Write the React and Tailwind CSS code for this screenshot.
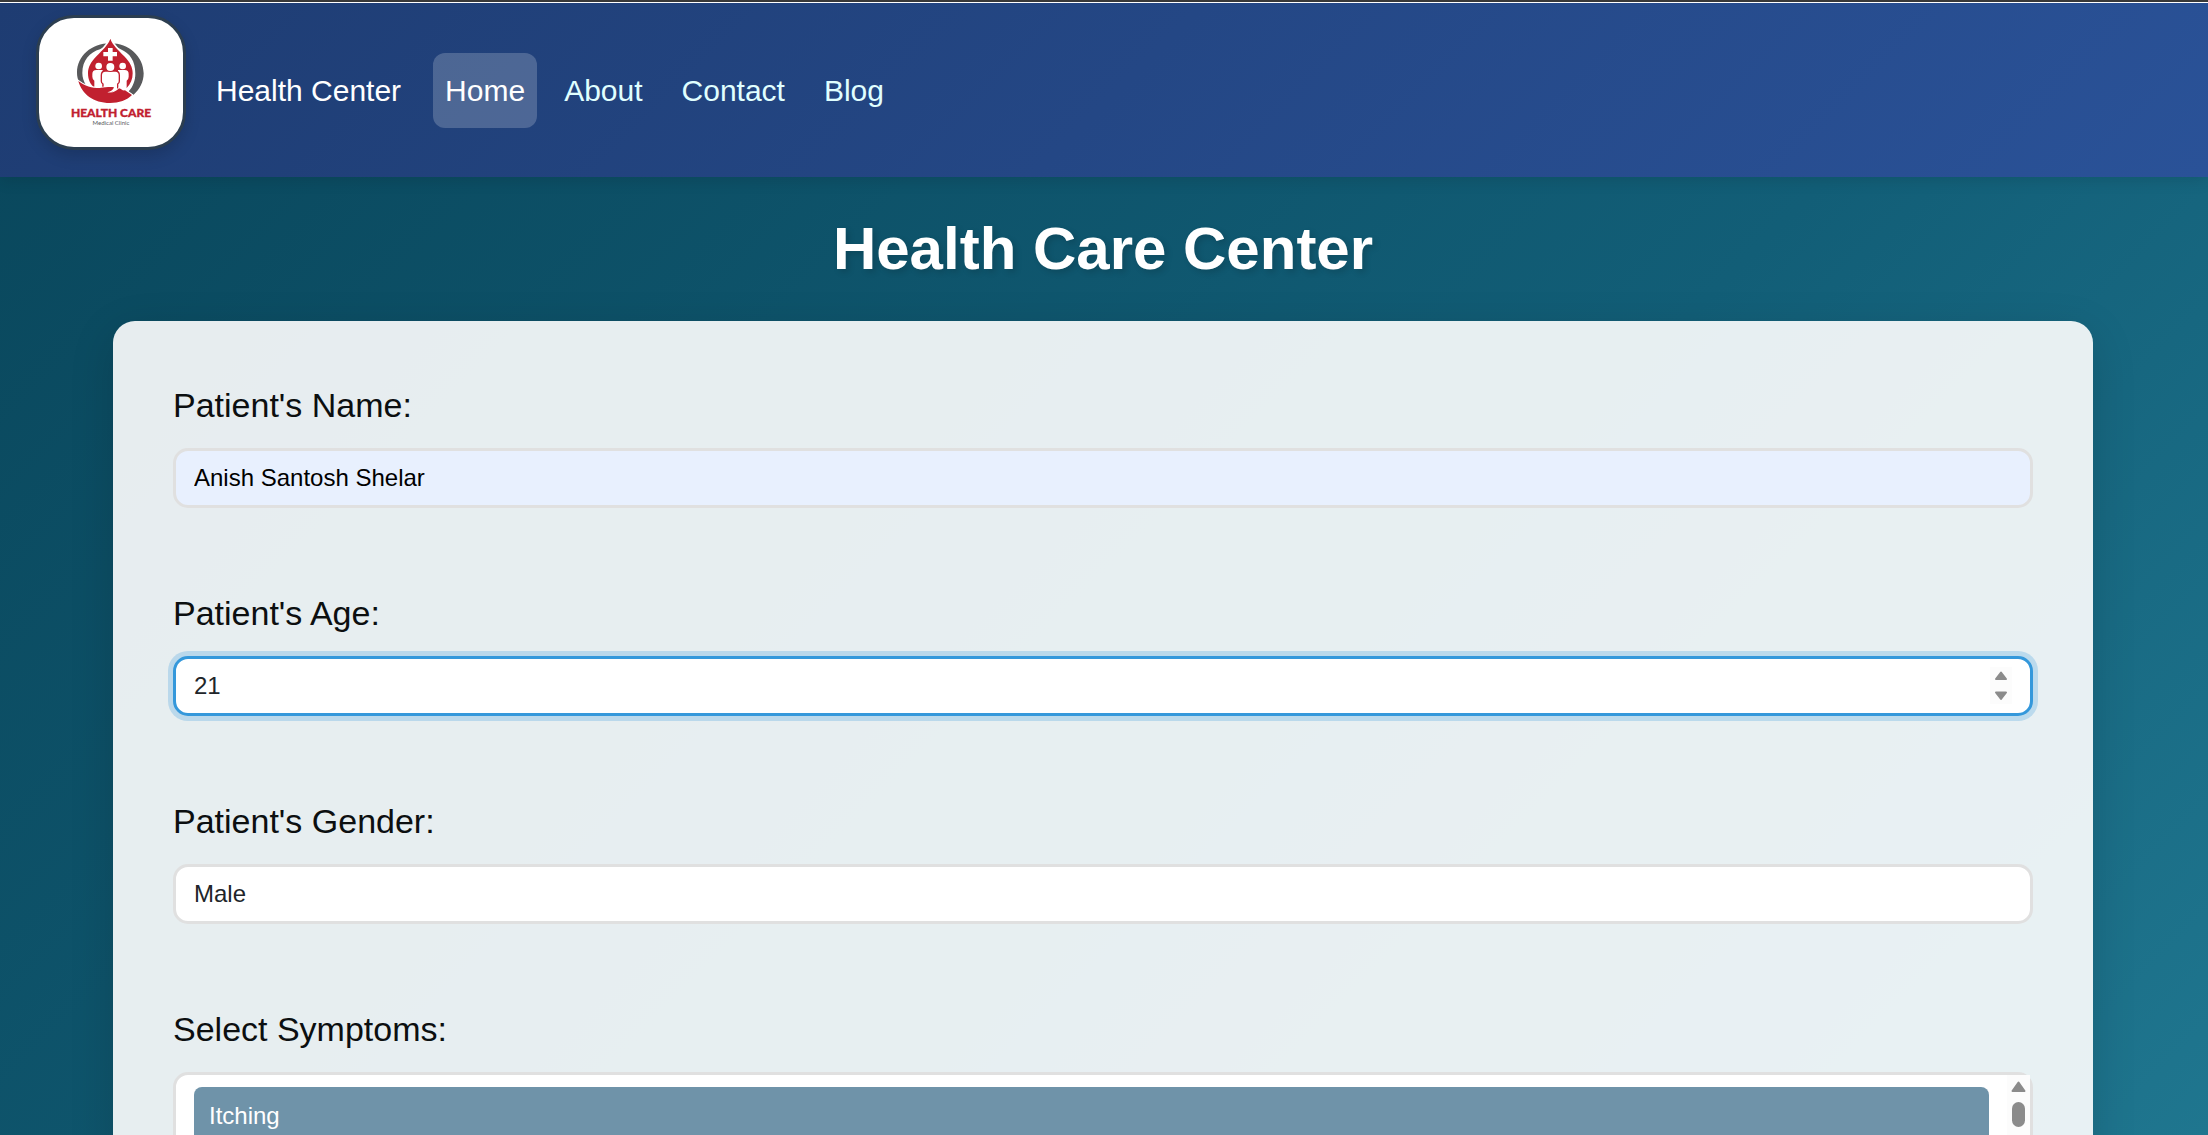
import React from "react";

const navLinks = ["Home", "About", "Contact", "Blog"];

const labelClass = "mb-[19px] block text-[34px] leading-[48px] text-[#0c0f10]";
const fieldClass =
  "block h-[60px] w-full appearance-none rounded-[15px] border-[3px] px-[18px] text-[24px] outline-none";

function Logo() {
  return (
    <svg viewBox="117 54 432 387" className="h-full w-full" role="img" aria-label="Health Care Medical Clinic">
      <path
        d="M331 130 C274 130 231 168 231 218 C231 228 233 236 236 244 L258 256 C251 244 247 232 247 219 C247 181 269 157 300 148 Z"
        fill="#58595b"
      />
      <path
        d="M331 130 C387 130 431 170 431 220 C431 246 419 269 400 285 L386 274 C399 260 406 241 406 221 C406 183 390 160 362 148 Z"
        fill="#58595b"
      />
      <path
        d="M331 116 C324 136 307 150 290 168 C272 186 264 202 264 220 C264 239 271 254 284 264 L380 264 C392 252 398 238 398 220 C398 202 390 186 372 168 C355 150 338 136 331 116 Z"
        fill="#c1202f"
        stroke="#fff"
        strokeWidth="9"
        paintOrder="stroke"
      />
      <path d="M324 144 h14 v12 h13 v13 h-13 v13 h-14 v-13 h-14 v-13 h14 Z" fill="#fff" />
      <g fill="#fff">
        <circle cx="296" cy="198" r="10" />
        <circle cx="368" cy="198" r="10" />
        <path d="M277 222 Q277 210 289 210 H308 V266 H283 V242 Q277 238 277 230 Z" />
        <path d="M386 222 Q386 210 374 210 H354 V266 H380 V242 Q386 238 386 230 Z" />
      </g>
      <path
        d="M304 226 Q304 213 316 213 H346 Q358 213 358 226 V244 Q358 250 353 252 V276 H309 V252 Q304 250 304 244 Z"
        fill="#fff"
        stroke="#c1202f"
        strokeWidth="4"
      />
      <circle cx="331" cy="201" r="15" fill="#c1202f" />
      <circle cx="331" cy="201" r="12" fill="#fff" />
      <path
        d="M235 243 C254 259 276 264 299 264 C318 262 330 260 342 262 C340 270 332 274 322 277 C338 280 348 274 357 265 C364 267 368 273 375 271 L396 285 C381 301 357 309 330 309 C280 309 246 283 235 243 Z"
        fill="#c1202f"
        stroke="#fff"
        strokeWidth="6"
        paintOrder="stroke"
      />
      <text
        x="333"
        y="351"
        textAnchor="middle"
        fill="#c1202f"
        stroke="#c1202f"
        strokeWidth="1"
        className="font-[Lato,sans-serif] text-[36px] font-black"
      >
        HEALTH CARE
      </text>
      <text
        x="333"
        y="375"
        textAnchor="middle"
        fill="#58595b"
        className="font-[Lato,sans-serif] text-[18px]"
      >
        Medical Clinic
      </text>
    </svg>
  );
}

function Header() {
  return (
    <header className="border-t border-white bg-linear-135 from-[#1e3c72] to-[#2a5298] shadow-[0_3px_15px_rgba(0,0,0,0.12)]">
      <nav className="flex items-start px-9 pt-3 pb-[27px]">
        <a
          href="#"
          className="h-[135px] w-[150px] overflow-hidden rounded-[38px] border-[3px] border-[#2c3e50] bg-white shadow-[0_6px_15px_rgba(0,0,0,0.15)]"
        >
          <Logo />
        </a>
        <div className="mt-[38px] flex items-center text-[30px] leading-[45px]">
          <a href="#" className="mr-8 ml-[30px] text-white">
            Health Center
          </a>
          <ul className="flex gap-[15px]">
            {navLinks.map((name) => (
              <li key={name}>
                <a
                  href="#"
                  className={
                    name === "Home"
                      ? "block rounded-xl bg-white/20 px-3 py-[15px] text-white"
                      : "block rounded-xl px-3 py-[15px] text-[#e0ffff]"
                  }
                >
                  {name}
                </a>
              </li>
            ))}
          </ul>
        </div>
      </nav>
    </header>
  );
}

function Spinner() {
  return (
    <svg
      viewBox="0 0 22 37"
      className="pointer-events-none absolute top-[11px] right-[21px] h-[37px] w-[22px] bg-[#fcfcfc]"
      fill="#8b8b8b"
      stroke="#8b8b8b"
      strokeWidth="2"
      strokeLinejoin="round"
      aria-hidden="true"
    >
      <path d="M11 5.500 L16 12 H6 Z" />
      <path d="M11 32 L16 25.500 H6 Z" />
    </svg>
  );
}

function ScrollTrack() {
  return (
    <div
      className="pointer-events-none absolute top-[3px] right-[3px] bottom-[3px] flex w-[23px] flex-col items-center gap-[9px] bg-[#fcfcfc] pt-[6px]"
      aria-hidden="true"
    >
      <svg viewBox="0 0 15 12" className="h-3 w-[15px]" fill="#8b8b8b" stroke="#8b8b8b" strokeWidth="2" strokeLinejoin="round">
        <path d="M7.500 1.500 L13.500 10 H1.500 Z" />
      </svg>
      <div className="h-[25px] w-[13px] rounded-full bg-[#8b8b8b]" />
    </div>
  );
}

export default function App() {
  return (
    <div className="h-screen overflow-hidden bg-linear-135 from-[#09465b] via-[#125e77] via-60% to-[#1f768f] font-['Liberation_Sans',Arial,sans-serif]">
      <div className="h-0.5 bg-[#3b3b3b]" />
      <Header />
      <main className="pr-[115px] pl-[113px]">
        <h1 className="pt-[27px] pb-[27px] text-center text-[60px] leading-[90px] font-bold text-white [text-shadow:3px_3px_6px_rgba(0,0,0,0.15)]">
          Health Care Center
        </h1>
        <form className="flex flex-col gap-[81px] rounded-[22px] bg-white/90 p-[60px] shadow-[0_12px_45px_rgba(0,0,0,0.14)]">
          <div>
            <label htmlFor="name" className={labelClass}>
              Patient's Name:
            </label>
            <input
              id="name"
              type="text"
              defaultValue="Anish Santosh Shelar"
              className={`${fieldClass} border-[#e0e0e0] bg-[#e8f0fe] text-black`}
            />
          </div>
          <div>
            <label htmlFor="age" className={labelClass}>
              Patient's Age:
            </label>
            <div className="relative">
              <input
                id="age"
                type="number"
                defaultValue="21"
                className={`${fieldClass} border-[#3498db] bg-white text-[#212529] shadow-[0_0_0_5px_rgba(52,152,219,0.25)] [&::-webkit-inner-spin-button]:appearance-none`}
              />
              <Spinner />
            </div>
          </div>
          <div>
            <label htmlFor="gender" className={labelClass}>
              Patient's Gender:
            </label>
            <select id="gender" className={`${fieldClass} border-[#e0e0e0] bg-white text-[#212529]`}>
              <option>Male</option>
            </select>
          </div>
          <div>
            <label htmlFor="symptoms" className={labelClass}>
              Select Symptoms:
            </label>
            <div className="relative">
              <select
                id="symptoms"
                multiple
                defaultValue={["itching"]}
                className="block h-[225px] w-full appearance-none overflow-hidden rounded-[15px] border-[3px] border-[#e0e0e0] bg-white py-3 pr-[41px] pl-[18px] text-[24px] outline-none"
              >
                <option
                  value="itching"
                  className="rounded-lg bg-linear-to-r from-[#6f93a9] to-[#6f93a9] px-[15px] py-[15px] leading-[28px] text-white checked:text-white"
                >
                  Itching
                </option>
              </select>
              <ScrollTrack />
            </div>
          </div>
        </form>
      </main>
    </div>
  );
}
